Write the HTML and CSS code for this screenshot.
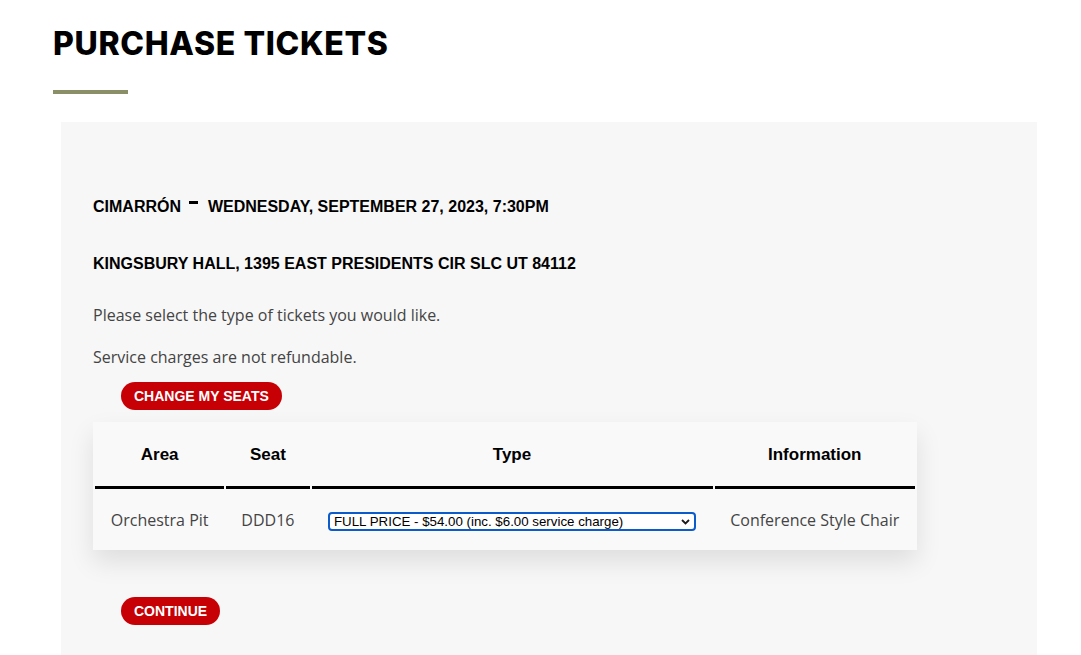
FILE: index.html
```html
<!DOCTYPE html>
<html lang="en">
<head>
<meta charset="UTF-8" />
<meta name="viewport" content="width=device-width, initial-scale=1" />
<title>Purchase Tickets</title>
<link rel="stylesheet" href="styles.css">
</head>
<body>

<div class="page">
  <h1 class="page-title">PURCHASE TICKETS</h1>
  <div class="title-rule"></div>

  <div class="panel">
    <h3 class="event-title">CIMARRÓN <span class="dash"></span> WEDNESDAY, SEPTEMBER 27, 2023, 7:30PM</h3>
    <h3 class="event-venue">KINGSBURY HALL, 1395 EAST PRESIDENTS CIR SLC UT 84112</h3>

    <p class="note">Please select the type of tickets you would like.</p>
    <p class="note">Service charges are not refundable.</p>

    <button class="red-btn" type="button">CHANGE MY SEATS</button>

    <table class="seat-table">
      <thead>
        <tr>
          <th class="col-area">Area</th>
          <th class="col-seat">Seat</th>
          <th class="col-type">Type</th>
          <th class="col-info">Information</th>
        </tr>
      </thead>
      <tbody>
        <tr>
          <td>Orchestra Pit</td>
          <td>DDD16</td>
          <td>
            <span class="select-wrap">
              <select class="type-select">
                <option>FULL PRICE - $54.00 (inc. $6.00 service charge)</option>
              </select>
              <svg class="chevron" width="9" height="6" viewBox="0 0 9 6"><path d="M1 1l3.5 3.5L8 1" fill="none" stroke="#1a1a1a" stroke-width="1.8"/></svg>
            </span>
          </td>
          <td>Conference Style Chair</td>
        </tr>
      </tbody>
    </table>

    <button class="red-btn continue" type="button">CONTINUE</button>
  </div>
</div>

</body>
</html>
```

FILE: styles.css
```css
body {
  margin: 0;
  background: #ffffff;
  font-family: 'Open Sans', sans-serif;
  color: #444;
}
.page {
  padding: 28px 44px 0 53px;
}
.page-title {
  margin: 0;
  font-family: Inter, 'Liberation Sans', sans-serif;
  font-weight: 800;
  font-size: 32px;
  line-height: 32px;
  color: #000;
  letter-spacing: 0.65px;
}
.title-rule {
  width: 75px;
  height: 4px;
  background: #8b8f67;
  margin-top: 30px;
}
.panel {
  margin: 28px 0 0 8px;
  width: 976px;
  background: #f7f7f7;
  padding: 76px 32px 40px;
  box-sizing: border-box;
  min-height: 560px;
}
.event-title, .event-venue {
  margin: 0;
  font-family: 'Liberation Sans', Arial, sans-serif;
  font-weight: 700;
  font-size: 16px;
  line-height: 18px;
  color: #000;
}
.event-venue {
  margin-top: 39px;
}
.dash {
  display: inline-block;
  width: 9px;
  height: 3px;
  background: #000;
  vertical-align: 8px;
  margin: 0 5px 0 4px;
}
.note {
  margin: 0;
  font-size: 16px;
  line-height: 20px;
  color: #444;
}
.event-venue + .note {
  margin-top: 32px;
}
.note + .note {
  margin-top: 22px;
}
.red-btn {
  display: block;
  margin: 15px 0 0 28px;
  height: 28px;
  padding: 0 13px;
  border: none;
  border-radius: 14px;
  background: #c70006;
  color: #fff;
  font-family: 'Liberation Sans', Arial, sans-serif;
  font-weight: 700;
  font-size: 14px;
  cursor: pointer;
}
.red-btn.continue {
  margin-top: 47px;
}
.seat-table {
  margin-top: 12px;
  width: 824px;
  border-collapse: separate;
  border-spacing: 2px 0;
  background: #f9f9f9;
  box-shadow: 0 12px 24px rgb(0 0 0 / 0.1);
}
.seat-table th {
  height: 62px;
  padding: 0;
  font-family: 'Liberation Sans', Arial, sans-serif;
  font-weight: 700;
  font-size: 17px;
  color: #000;
  border-bottom: 3px solid #000;
  vertical-align: middle;
  padding-top: 2px;
}
.col-area { width: 129px; }
.col-seat { width: 83px; }
.col-type { width: 400px; }
.col-info { width: 200px; }
.seat-table td {
  height: 61px;
  padding: 0;
  text-align: center;
  font-size: 16px;
  color: #444;
  vertical-align: middle;
}
.select-wrap {
  position: relative;
  display: inline-block;
  vertical-align: middle;
}
.type-select {
  appearance: none;
  -webkit-appearance: none;
  width: 368px;
  height: 19px;
  padding: 0 0 0 4px;
  border: 2px solid #0b5bcb;
  border-radius: 4px;
  background: #fff;
  color: #000;
  font-family: 'Liberation Sans', Arial, sans-serif;
  font-size: 13.3px;
  line-height: 15px;
  display: block;
}
.chevron {
  position: absolute;
  right: 6px;
  top: 7px;
  pointer-events: none;
}
```
